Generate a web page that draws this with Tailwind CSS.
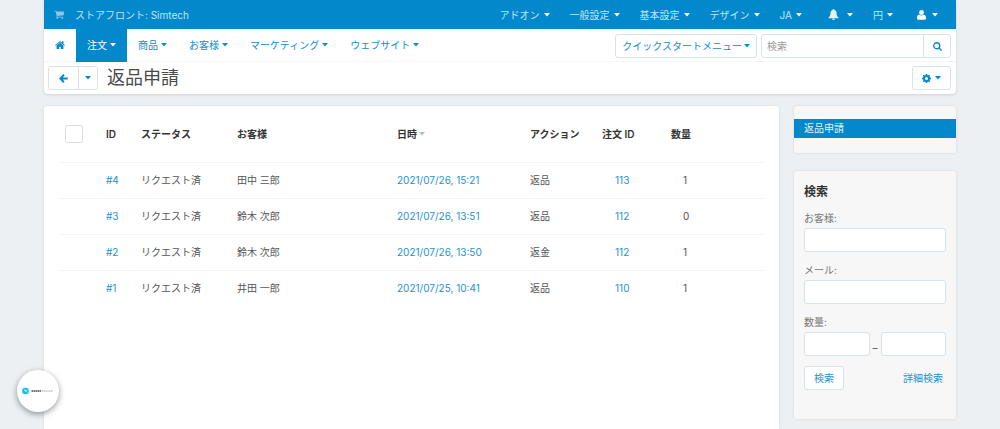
<!DOCTYPE html>
<html lang="ja">
<head>
<meta charset="utf-8">
<meta name="viewport" content="width=device-width, initial-scale=1">
<title>返品申請</title>
<script src="https://cdn.jsdelivr.net/npm/@tailwindcss/browser@4"></script>
</head>
<body class="min-h-screen flex flex-col bg-[#ecf0f3] px-[44px] font-['Inter','Noto_Sans_CJK_JP',sans-serif] text-[10px] leading-4 text-[#555]">
<svg class="hidden" aria-hidden="true">
  <symbol id="caret" viewBox="0 0 6 4"><path d="M0 0h6L3 3.5z" fill="currentColor"/></symbol>
  <symbol id="cart" viewBox="0 0 1664 1536"><path fill="currentColor" d="M640 1408a128 128 0 1 1-256 0 128 128 0 0 1 256 0zm896 0a128 128 0 1 1-256 0 128 128 0 0 1 256 0zm128-1088v512q0 24-16 42t-41 21L563 1017q13 60 13 70 0 16-24 64h920q26 0 45 19t19 45-19 45-45 19H448q-26 0-45-19t-19-45q0-11 8-31t16-36 21-40 15-30L267 256H64q-26 0-45-19T0 192t19-45 45-19h256q16 0 28 6t20 15 13 24 8 26 5 29 5 28h1201q26 0 45 19t19 45z"/></symbol>
  <symbol id="home" viewBox="0 0 1664 1312"><path fill="currentColor" d="M1408 768v480q0 26-19 45t-45 19H960V928H704v384H320q-26 0-45-19t-19-45V768q0-1 1-3l575-474 575 474q1 2 1 3zm223-69l-62 74q-8 9-21 11h-3q-13 0-21-7L832 200 140 777q-12 8-24 7-13-2-21-11l-62-74q-8-10-7-23t11-22L756 55q32-26 76-26t76 26l244 204V64q0-14 9-23t23-9h192q14 0 23 9t9 23v408l219 182q10 8 11 22t-7 23z"/></symbol>
</svg>

<header class="bg-white rounded-b-sm shadow-[0_1px_3px_rgba(0,0,0,0.12)]">
  <div class="h-[29px] bg-[#0388cc] text-[#c3e3f5] flex items-center justify-between pl-[10px] pr-[18px]">
    <a href="#" class="flex items-center gap-[11px]"><svg class="w-[10px] h-[9px] text-[#8cc8ea]"><use href="#cart"/></svg>ストアフロント: Simtech</a>
    <nav class="flex items-center gap-5" aria-label="管理">
      <button class="flex items-center gap-1">アドオン<svg class="w-[6px] h-1 text-white"><use href="#caret"/></svg></button>
      <button class="flex items-center gap-1">一般設定<svg class="w-[6px] h-1 text-white"><use href="#caret"/></svg></button>
      <button class="flex items-center gap-1">基本設定<svg class="w-[6px] h-1 text-white"><use href="#caret"/></svg></button>
      <button class="flex items-center gap-1">デザイン<svg class="w-[6px] h-1 text-white"><use href="#caret"/></svg></button>
      <button class="flex items-center gap-1">JA<svg class="w-[6px] h-1 text-white"><use href="#caret"/></svg></button>
      <button class="flex items-center gap-2 pl-[6px]" aria-label="通知"><svg class="w-[11px] h-[11px] text-[#e3f2fa]" viewBox="0 0 22 22"><path fill="currentColor" d="M11 0c1 0 1.600.7 1.600 1.700C15.500 2.500 17 4.800 17 8c0 5 1.500 7 4 8.800v1.700H1v-1.700C3.500 15 5 13 5 8c0-3.200 1.500-5.500 4.400-6.300C9.400.7 10 0 11 0zM8 19.500h6a3 2.500 0 0 1-6 0z"/></svg><svg class="w-[6px] h-1 text-white"><use href="#caret"/></svg></button>
      <button class="flex items-center gap-1">円<svg class="w-[6px] h-1 text-white"><use href="#caret"/></svg></button>
      <button class="flex items-center gap-[6px]" aria-label="アカウント"><svg class="w-[9px] h-[10px] ml-1 text-white" viewBox="0 0 18 20"><circle cx="9" cy="5" r="4.800" fill="currentColor"/><path fill="currentColor" d="M4.500 9.200Q9 13 13.500 9.200 18 10 18 16.500 18 19.500 15 19.500H3Q0 19.500 0 16.500 0 10 4.500 9.200z"/></svg><svg class="w-[6px] h-1 text-white"><use href="#caret"/></svg></button>
    </nav>
  </div>
  <div class="h-[33px] flex items-center justify-between pr-[5px] border-b border-[#f5f6f6] text-[#0f8ed0]">
    <nav class="flex h-[33px] shrink-0" aria-label="メイン">
      <a href="#" class="w-8 flex items-center justify-center text-[#0388cc]" aria-label="ホーム"><svg class="w-[10px] h-2"><use href="#home"/></svg></a>
      <a href="#" class="flex items-center gap-[3px] px-[11px] bg-[#0388cc] text-white">注文<svg class="w-[6px] h-1"><use href="#caret"/></svg></a>
      <a href="#" class="flex items-center gap-[3px] px-[11px]">商品<svg class="w-[6px] h-1"><use href="#caret"/></svg></a>
      <a href="#" class="flex items-center gap-[3px] px-[11px]">お客様<svg class="w-[6px] h-1"><use href="#caret"/></svg></a>
      <a href="#" class="flex items-center gap-[3px] px-[11px]">マーケティング<svg class="w-[6px] h-1"><use href="#caret"/></svg></a>
      <a href="#" class="flex items-center gap-[3px] px-[11px]">ウェブサイト<svg class="w-[6px] h-1"><use href="#caret"/></svg></a>
    </nav>
    <div class="flex gap-1 pt-[2px]">
      <button class="h-6 px-[6px] flex items-center gap-[2px] border border-[#d9e2e8] rounded-[3px]">クイックスタートメニュー<svg class="w-[6px] h-1"><use href="#caret"/></svg></button>
      <form class="flex h-6 w-[190px] border border-[#d9e2e8] rounded-[3px]">
        <input type="text" aria-label="検索" placeholder="検索" class="flex-1 min-w-0 px-[5px] placeholder:text-[#999] outline-none">
        <button type="button" aria-label="検索する" class="w-[27px] border-l border-[#d9e2e8] flex items-center justify-center text-[#0388cc]"><svg class="w-[9px] h-[9px]" viewBox="0 0 18 18" fill="none" stroke="currentColor" stroke-width="2.600"><circle cx="7.500" cy="7.500" r="6"/><path d="M12 12l4.500 4.500" stroke-linecap="round"/></svg></button>
      </form>
    </div>
  </div>
  <div class="h-8 flex items-center justify-between pl-1 pr-[5px] text-[#0388cc]">
    <div class="flex items-center gap-[9px]">
      <div class="flex h-6 border border-[#d9e2e8] rounded-[3px]">
        <button aria-label="戻る" class="w-[29px] flex items-center justify-center"><svg class="w-[9px] h-[9px]" viewBox="0 0 18 18" fill="none" stroke="currentColor" stroke-width="3.800"><path d="M17.500 9H3M10 1.500L2.500 9l7.500 7.500"/></svg></button>
        <button aria-label="履歴" class="w-[19px] border-l border-[#d9e2e8] flex items-center justify-center"><svg class="w-[6px] h-1"><use href="#caret"/></svg></button>
      </div>
      <h1 class="text-[18px] leading-6 text-[#4a4a4a]">返品申請</h1>
    </div>
    <button aria-label="設定" class="h-6 w-[39px] flex items-center justify-center gap-1 border border-[#d9e2e8] rounded-[3px]"><svg class="w-[9px] h-[9px]" viewBox="0 0 18 18"><path fill="currentColor" fill-rule="evenodd" d="M7.500 0h3l.4 2.400 1.500.6 2-1.400 2 2L15 5.600l.6 1.500 2.400.4v3l-2.400.4-.6 1.500 1.400 2-2 2-2-1.400-1.500.6-.4 2.400h-3l-.4-2.400-1.500-.6-2 1.400-2-2 1.400-2-.6-1.500L0 10.500v-3l2.400-.4L3 5.600l-1.400-2 2-2 2 1.400 1.500-.6zM9 6a3 3 0 1 0 0 6 3 3 0 0 0 0-6z"/></svg><svg class="w-[6px] h-1"><use href="#caret"/></svg></button>
  </div>
</header>

<div class="flex-1 flex gap-[15px] pt-3">
  <main class="flex-1 min-w-0 bg-white rounded-t-[3px] px-[15px] shadow-[0_0_3px_rgba(0,0,0,0.1)]">
    <table class="w-full table-fixed text-left">
      <colgroup><col class="w-[47px]"><col class="w-[35px]"><col class="w-[96px]"><col class="w-[160px]"><col class="w-[133px]"><col class="w-[72px]"><col class="w-[69px]"><col></colgroup>
      <thead class="text-[#333]">
        <tr class="h-14 border-b border-[#f3f4f4]">
          <th class="pl-[6px]"><input type="checkbox" aria-label="すべて選択" class="block appearance-none size-[18px] border border-[#ddd] rounded-[2px] bg-white"></th>
          <th class="font-semibold">ID</th><th class="font-semibold">ステータス</th><th class="font-semibold">お客様</th>
          <th class="font-semibold"><a href="#" class="flex items-center gap-[2px]">日時<svg class="w-[6px] h-1 text-[#bbb]"><use href="#caret"/></svg></a></th>
          <th class="font-semibold">アクション</th><th class="font-semibold">注文 ID</th><th class="font-semibold">数量</th>
        </tr>
      </thead>
      <tbody>
        <tr class="h-9 border-b border-[#f3f4f4]"><td></td><td><a href="#" class="text-[#1a93d3]">#4</a></td><td>リクエスト済</td><td>田中 三郎</td><td><a href="#" class="text-[#1a93d3]">2021/07/26, 15:21</a></td><td>返品</td><td class="pl-[13px]"><a href="#" class="text-[#1a93d3]">113</a></td><td class="pl-3">1</td></tr>
        <tr class="h-9 border-b border-[#f3f4f4]"><td></td><td><a href="#" class="text-[#1a93d3]">#3</a></td><td>リクエスト済</td><td>鈴木 次郎</td><td><a href="#" class="text-[#1a93d3]">2021/07/26, 13:51</a></td><td>返品</td><td class="pl-[13px]"><a href="#" class="text-[#1a93d3]">112</a></td><td class="pl-3">0</td></tr>
        <tr class="h-9 border-b border-[#f3f4f4]"><td></td><td><a href="#" class="text-[#1a93d3]">#2</a></td><td>リクエスト済</td><td>鈴木 次郎</td><td><a href="#" class="text-[#1a93d3]">2021/07/26, 13:50</a></td><td>返金</td><td class="pl-[13px]"><a href="#" class="text-[#1a93d3]">112</a></td><td class="pl-3">1</td></tr>
        <tr class="h-9"><td></td><td><a href="#" class="text-[#1a93d3]">#1</a></td><td>リクエスト済</td><td>井田 一郎</td><td><a href="#" class="text-[#1a93d3]">2021/07/25, 10:41</a></td><td>返品</td><td class="pl-[13px]"><a href="#" class="text-[#1a93d3]">110</a></td><td class="pl-3">1</td></tr>
      </tbody>
    </table>
  </main>

  <aside class="w-[162px] shrink-0 flex flex-col gap-[18px] pb-[10px]">
    <nav class="bg-[#f7f7f7] rounded-[3px] pt-[13px] pb-[15px] shadow-[0_0_3px_rgba(0,0,0,0.1)]" aria-label="サブ">
      <a href="#" class="block h-[19px] leading-[19px] px-[10px] bg-[#0388cc] text-[#e3f2fa]">返品申請</a>
    </nav>
    <form class="bg-[#f7f7f7] rounded-[3px] pt-[13px] pb-[29px] px-[10px] shadow-[0_0_3px_rgba(0,0,0,0.1)]">
      <h2 class="text-[12px] leading-4 font-bold text-[#333] mb-[10px]">検索</h2>
      <label for="customer" class="block mb-[2px] text-[#777]">お客様:</label>
      <input id="customer" type="text" class="block w-full h-6 mb-[10px] px-1 bg-white border border-[#d9e2e8] rounded-[3px]">
      <label for="email" class="block mb-[2px] text-[#777]">メール:</label>
      <input id="email" type="text" class="block w-full h-6 mb-[10px] px-1 bg-white border border-[#d9e2e8] rounded-[3px]">
      <label for="qty" class="block mb-[2px] text-[#777]">数量:</label>
      <div class="flex items-center gap-[3px] mb-[10px]">
        <input id="qty" type="text" class="flex-1 min-w-0 h-6 px-1 bg-white border border-[#d9e2e8] rounded-[3px]">
        <span class="self-end">–</span>
        <input type="text" aria-label="数量の上限" class="flex-1 min-w-0 h-6 px-1 bg-white border border-[#d9e2e8] rounded-[3px]">
      </div>
      <div class="flex items-center justify-between text-[#1a93d3]">
        <button type="button" class="h-6 px-[9px] bg-white border border-[#d9e2e8] rounded-[3px]">検索</button>
        <a href="#" class="pr-[3px]">詳細検索</a>
      </div>
    </form>
  </aside>
</div>

<button aria-label="ツールバー" class="fixed left-[17px] bottom-[17px] size-[42px] rounded-full bg-white shadow-[0_2px_6px_rgba(0,0,0,0.4)] flex items-center justify-center">
  <svg class="w-8 h-2" viewBox="0 0 32 8"><circle cx="3.500" cy="4" r="3.300" fill="#0bbcf0"/><path d="M2 2.800l3 2.400M3 2.500l2 1.500" stroke="#fff" stroke-width=".8"/><path d="M9.500 4h10" stroke="#777" stroke-width="2.200" stroke-dasharray="1.600 .4"/><path d="M20 4h11" stroke="#ccc" stroke-width="2" stroke-dasharray="1.200 .6"/></svg>
</button>
</body>
</html>
